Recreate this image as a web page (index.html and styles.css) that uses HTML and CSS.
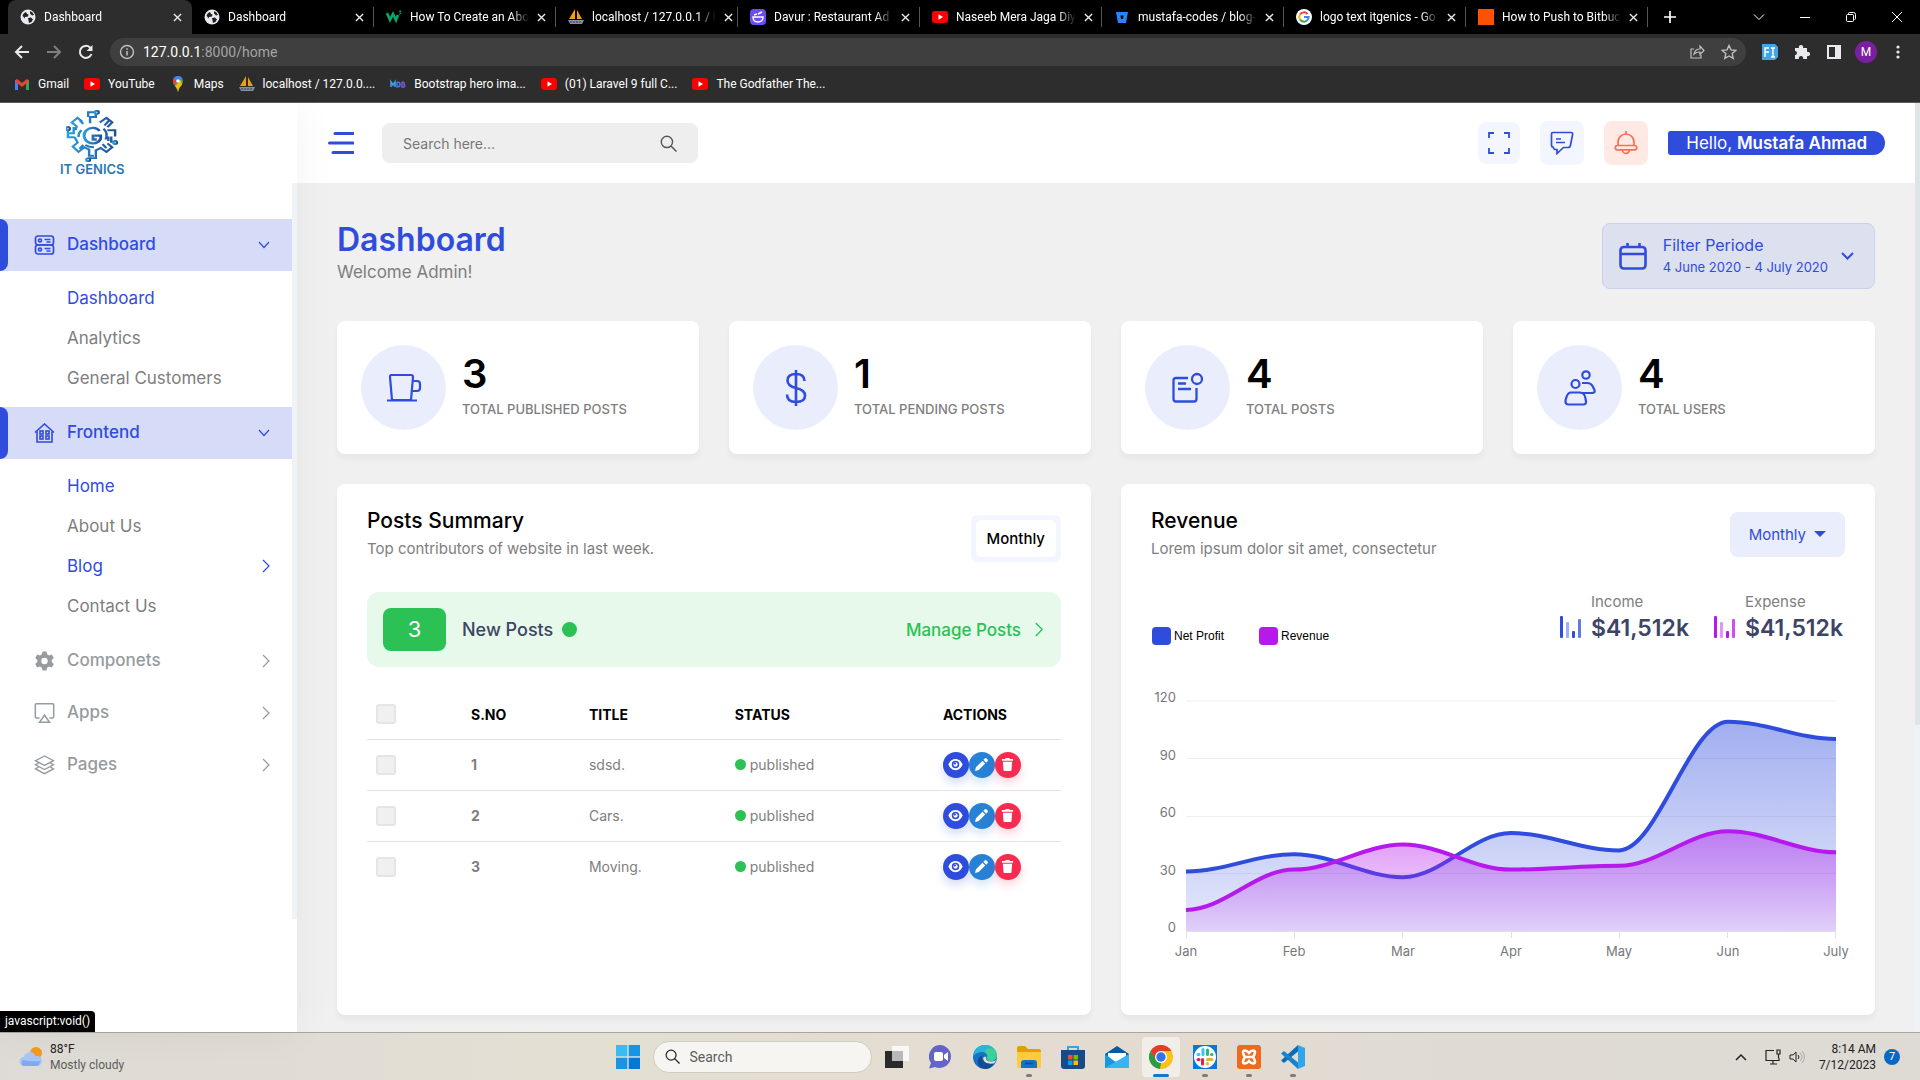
FILE: index.html
```html
<!DOCTYPE html>
<html lang="en">
<head>
<meta charset="utf-8">
<title>Dashboard</title>
<link rel="stylesheet" href="styles.css">
</head>
<body>
<svg class="sprite" aria-hidden="true">
  <symbol id="globe" viewBox="0 0 16 16"><circle cx="8" cy="8" r="7.500" fill="#e8eaed"/><path d="M2.500 6.500q1-3 3.500-3.500l1 2 1.500.5-.5 2-3 .5-.5 1.500zM10 2q3 1 4 4l-2 .5-2-2zM8 9l3-.5 2 2q-1 3-4 3.500l-.5-2.500z" fill="#202124"/></symbol>
  <symbol id="x" viewBox="0 0 10 10"><path d="M1 1l8 8M9 1L1 9" stroke="#e8eaed" stroke-width="1.5"/></symbol>
  <symbol id="yt" viewBox="0 0 16 16"><rect y="2" width="16" height="12" rx="3" fill="#f00"/><path d="M6.500 5.300v5.400L11 8z" fill="#fff"/></symbol>
  <symbol id="pma" viewBox="0 0 16 16"><path d="M7 0v10H1zM9 1l5 9H9z" fill="#f89c0e"/><path d="M0 11h16l-2 4H2z" fill="#8a8fa8"/><path d="M2 13h12" stroke="#333" stroke-dasharray="2 1"/></symbol>
  <symbol id="right" viewBox="0 0 8 14"><path d="M1 1l6 6-6 6" fill="none" stroke="currentColor" stroke-width="1.2"/></symbol>
  <symbol id="down" viewBox="0 0 12 8"><path d="M1 1l5 5.500L11 1" fill="none" stroke="currentColor" stroke-width="1.2"/></symbol>
  <symbol id="search" viewBox="0 0 16 16"><circle cx="6.500" cy="6.500" r="5.300" fill="none" stroke="currentColor" stroke-width="1.300"/><path d="M10.300 10.300L15.500 15.500" stroke="currentColor" stroke-width="1.400"/></symbol>
  <symbol id="eye" viewBox="0 0 16 12"><path d="M8 0C4 0 1.500 3 .5 6c1 3 3.500 6 7.500 6s6.500-3 7.500-6C14.500 3 12 0 8 0z" fill="#fff"/><circle cx="8" cy="6" r="4" fill="#2f4cdd"/><circle cx="8" cy="6" r="2.300" fill="#fff"/><circle cx="7.300" cy="5" r="1.200" fill="#2f4cdd"/></symbol>
  <symbol id="pen" viewBox="0 0 14 14"><path d="M0 14l1-4 7-7 3 3-7 7zM9 2l1.500-1.500a1.500 1.500 0 0 1 2 0l1 1a1.500 1.500 0 0 1 0 2L12 5z" fill="#fff"/></symbol>
  <symbol id="bin" viewBox="0 0 12 14"><path d="M0 1h3.500l.7-1h3.600l.7 1H12v2H0zM1 4h10l-.7 9a1 1 0 0 1-1 1H2.700a1 1 0 0 1-1-1z" fill="#fff"/></symbol>
</svg>

<header class="browser">
  <div class="tabs">
    <div class="tab active"><svg class="fav"><use href="#globe"/></svg><span>Dashboard</span><button aria-label="Close tab"><svg><use href="#x"/></svg></button></div>
    <div class="tab"><svg class="fav"><use href="#globe"/></svg><span>Dashboard</span><button aria-label="Close tab"><svg><use href="#x"/></svg></button></div>
    <div class="tab"><svg class="fav" viewBox="0 0 16 16"><path d="M1 4l3 7 3-6 3 6 2-5" fill="none" stroke="#04aa6d" stroke-width="2.600"/><path d="M13 2h2l-1 1.500q2 1-1 2" fill="none" stroke="#04aa6d"/></svg><span>How To Create an Abo</span><button aria-label="Close tab"><svg><use href="#x"/></svg></button></div>
    <div class="tab"><svg class="fav"><use href="#pma"/></svg><span>localhost / 127.0.0.1 / l</span><button aria-label="Close tab"><svg><use href="#x"/></svg></button></div>
    <div class="tab"><svg class="fav" viewBox="0 0 16 16"><rect width="16" height="16" rx="4" fill="#6c4cf0"/><path d="M3 8h10q0 5-5 5T3 8zM4 6l3-1M8 5l4-2" fill="none" stroke="#fff" stroke-width="1.400"/></svg><span>Davur : Restaurant Ad</span><button aria-label="Close tab"><svg><use href="#x"/></svg></button></div>
    <div class="tab"><svg class="fav"><use href="#yt"/></svg><span>Naseeb Mera Jaga Diy</span><button aria-label="Close tab"><svg><use href="#x"/></svg></button></div>
    <div class="tab"><svg class="fav" viewBox="0 0 16 16"><path d="M2 3h12l-2 11H4z" fill="#2684ff"/><path d="M6.500 6.500h3l-.5 3.500H7z" fill="#000"/></svg><span>mustafa-codes / blog-</span><button aria-label="Close tab"><svg><use href="#x"/></svg></button></div>
    <div class="tab"><svg class="fav" viewBox="0 0 16 16"><circle cx="8" cy="8" r="8" fill="#fff"/><g fill="none" stroke-width="2"><path d="M11.500 5A4.700 4.700 0 0 0 4 5.500" stroke="#ea4335"/><path d="M4 5.500a4.700 4.700 0 0 0 0 5" stroke="#fbbc05"/><path d="M4 10.500a4.700 4.700 0 0 0 7 1" stroke="#34a853"/><path d="M11 11.500A4.700 4.700 0 0 0 12.700 8H8" stroke="#4285f4"/></g></svg><span>logo text itgenics - Go</span><button aria-label="Close tab"><svg><use href="#x"/></svg></button></div>
    <div class="tab"><svg class="fav" viewBox="0 0 16 16"><path d="M0 0h16v16H0z" fill="#ff5200"/></svg><span>How to Push to Bitbuc</span><button aria-label="Close tab"><svg><use href="#x"/></svg></button></div>
    <button class="newtab" aria-label="New tab"><svg viewBox="0 0 12 12"><path d="M6 0v12M0 6h12" stroke="#fff" stroke-width="1.700"/></svg></button>
    <div class="wincontrols">
      <button aria-label="Search tabs"><svg viewBox="0 0 12 12"><path d="M1 3.500l5 5 5-5"/></svg></button>
      <button aria-label="Minimize"><svg viewBox="0 0 12 12"><path d="M1 6.500h10"/></svg></button>
      <button aria-label="Restore"><svg viewBox="0 0 12 12"><rect x="1.500" y="3.500" width="7" height="7" rx="1"/><path d="M3.500 3V2.500q0-1 1-1h4q2 0 2 2v4q0 1-1 1"/></svg></button>
      <button aria-label="Close"><svg viewBox="0 0 12 12"><path d="M1 1l10 10M11 1L1 11"/></svg></button>
    </div>
  </div>
  <div class="toolbar">
    <button aria-label="Back"><svg viewBox="0 0 16 16"><path d="M15 8H2M8 2L2 8l6 6" fill="none" stroke="#e8eaed" stroke-width="2"/></svg></button>
    <button aria-label="Forward"><svg viewBox="0 0 16 16"><path d="M1 8h13M8 2l6 6-6 6" fill="none" stroke="#7d7f82" stroke-width="2"/></svg></button>
    <button aria-label="Reload"><svg viewBox="0 0 16 16"><path d="M13.500 10A6 6 0 1 1 12 3.500l1 1" fill="none" stroke="#e8eaed" stroke-width="2"/><path d="M14.500 1v6h-6z" fill="#e8eaed"/></svg></button>
    <div class="address">
      <svg viewBox="0 0 16 16"><circle cx="8" cy="8" r="6.500" fill="none" stroke="#bdc1c6" stroke-width="1.400"/><path d="M8 7v4.500M8 4.300v1.500" stroke="#bdc1c6" stroke-width="1.500"/></svg>
      <span class="url"><b>127.0.0.1</b>:8000/home</span>
      <svg viewBox="0 0 16 16"><path d="M5 5H2v9h10v-3M5 10q1-5 6-5V2l4 4.500-4 4V8Q7 8 5 10z" fill="none" stroke="#bdc1c6" stroke-width="1.200"/></svg>
      <svg viewBox="0 0 16 16"><path d="M8 1.500l2 4.400 4.800.5-3.600 3.200 1 4.800L8 12l-4.200 2.400 1-4.800L1.200 6.400 6 5.900z" fill="none" stroke="#bdc1c6" stroke-width="1.400"/></svg>
    </div>
    <div class="exts">
      <svg viewBox="0 0 16 16"><path d="M0 0h13l3 3v10l-3 3H0z" fill="#41a5e8"/><path d="M3 13V4h4M3 8h4M9 4h4M11 4v9M9 13h4" fill="none" stroke="#fff" stroke-width="1.400"/></svg>
      <svg viewBox="0 0 16 16"><path d="M1 4h4a2.200 2.200 0 1 1 4 0h4v4a2.200 2.200 0 1 1 0 4v3H9a2.200 2.200 0 1 0-4 0H1v-4a2 2 0 1 0 0-4z" fill="#e8eaed"/></svg>
      <svg viewBox="0 0 16 16"><path d="M2 2h12v12H2z" fill="none" stroke="#e8eaed" stroke-width="2"/><path d="M9 2h5v12H9z" fill="#e8eaed"/></svg>
      <span class="avatar">M</span>
      <svg viewBox="0 0 16 16"><g fill="#e8eaed"><circle cx="8" cy="3" r="1.600"/><circle cx="8" cy="8" r="1.600"/><circle cx="8" cy="13" r="1.600"/></g></svg>
    </div>
  </div>
  <nav class="bookmarks">
    <a href="#"><svg viewBox="0 0 16 16"><g fill="none" stroke-width="3"><path d="M2.500 14V4" stroke="#4285f4"/><path d="M13.500 14V4" stroke="#34a853"/><path d="M2 4l6 5 6-5" stroke="#ea4335"/></g></svg>Gmail</a>
    <a href="#"><svg><use href="#yt"/></svg>YouTube</a>
    <a href="#"><svg viewBox="0 0 16 16"><path d="M8 0a5 5 0 0 1 5 5c0 4-4 5-5 11C7 11 3 9 3 5a5 5 0 0 1 5-5z" fill="#34a853"/><path d="M8 0a5 5 0 0 1 4.500 3L4 9 3 5a5 5 0 0 1 5-5z" fill="#4285f4"/><path d="M3.600 2.600L7 5 4 9Q2 6 3.600 2.600z" fill="#ea4335"/><path d="M12 9Q9 11 8 16 7 12 5 10l6-6z" fill="#fbbc04"/><circle cx="8" cy="5" r="1.800" fill="#fff"/></svg>Maps</a>
    <a href="#"><svg><use href="#pma"/></svg>localhost / 127.0.0....</a>
    <a href="#"><svg viewBox="0 0 16 16"><g fill="none" stroke-width="1.600"><path d="M1 11V6l2 3 2-3v5" stroke="#3aa0e8"/><path d="M7 6v5q3 0 3-2.500T7 6" stroke="#4c6fe0"/><path d="M12 6v5h2q1.500-1.300 0-2.500Q15 6 12 6" stroke="#7458d8"/></g></svg>Bootstrap hero ima...</a>
    <a href="#"><svg><use href="#yt"/></svg>(01) Laravel 9 full C...</a>
    <a href="#"><svg><use href="#yt"/></svg>The Godfather The...</a>
  </nav>
</header>

<div class="page">
  <aside class="sidebar">
    <a class="logo" href="#">
      <svg viewBox="7 0 54 67" preserveAspectRatio="none"><defs><linearGradient id="lg" x1="0" x2="1"><stop stop-color="#2a9fd8"/><stop offset="1" stop-color="#234f9c"/></linearGradient></defs>
        <g fill="none" stroke="url(#lg)" stroke-width="2.500"><path d="M32 17V9h6V5M30 9V3h7M24 15l-5-5-6 6 5 5-1 5M42 16l7-6 6 6-5 6M21 13l4 5M52 13l-5 7M50 26h8v8M15 22v8H9v-4M9 30v5h7M54 34v7h3M51 34v6M16 35l3 7-5 5 6 7 6-6 5 3v8h5M50 43l5 5-6 6-6-5-5 3v10h-7M21 50l4-5M49 49l-4-5M23 26a13 13 0 0 0-3 9M27 45q4 3 9 3M46 24a14 14 0 0 1 2 14"/><path d="M42 27a9 10 0 1 0 1 10v-4h-8v5h4" stroke-width="3"/><circle cx="39" cy="3" r="2"/><circle cx="9" cy="24" r="2"/><circle cx="58" cy="42" r="2"/><circle cx="30" cy="64" r="2"/></g></svg>
      <span>IT GENICS</span>
    </a>
    <nav class="menu">
      <a class="item on" href="#"><svg viewBox="0 0 20 20"><g fill="none" stroke="currentColor" stroke-width="1.700"><rect x="1" y="1" width="18" height="9" rx="2.500"/><rect x="1" y="10" width="18" height="9" rx="2.500"/><circle cx="5.500" cy="5.500" r="1.500"/><circle cx="5.500" cy="14.500" r="1.500"/><path d="M10 4.500h6M12 7h4M10 13.500h6M12 16h4"/></g></svg><span>Dashboard</span><svg class="down"><use href="#down"/></svg></a>
      <div class="sub"><a class="hot" href="#">Dashboard</a><a href="#">Analytics</a><a href="#">General Customers</a></div>
      <a class="item on" href="#"><svg viewBox="0 0 20 20"><g fill="none" stroke="currentColor" stroke-width="1.600"><path d="M.5 9.500L10 1l9.500 8.500M2.500 8.500V19h15V8.500"/><rect x="5.500" y="8" width="3" height="3"/><rect x="11.500" y="8" width="3" height="3"/><rect x="5.500" y="13" width="3" height="3"/><rect x="11.500" y="13" width="3" height="3"/></g></svg><span>Frontend</span><svg class="down"><use href="#down"/></svg></a>
      <div class="sub"><a class="hot" href="#">Home</a><a href="#">About Us</a><a class="hot" href="#">Blog<svg class="right"><use href="#right"/></svg></a><a href="#">Contact Us</a></div>
      <a class="item" href="#"><svg viewBox="0 0 20 20"><path fill="currentColor" fill-rule="evenodd" d="M8 .5h4l.6 2.800 2 1.100 2.700-.9 2 3.500-2.100 1.900v2.200l2.100 1.900-2 3.500-2.700-.9-2 1.100-.6 2.800H8l-.6-2.800-2-1.100-2.700.9-2-3.500 2.100-1.900V8.900L.7 7l2-3.500 2.700.9 2-1.100zM10 6.800a3.200 3.200 0 1 0 0 6.400 3.200 3.200 0 0 0 0-6.400z"/></svg><span>Componets</span><svg class="right"><use href="#right"/></svg></a>
      <a class="item" href="#"><svg viewBox="0 0 20 20"><path fill="none" stroke="currentColor" stroke-width="1.500" d="M5 15H2q-1.200 0-1.200-1.200V2Q.8.800 2 .8h16q1.200 0 1.200 1.200v11.800Q19.200 15 18 15h-3M10 12l5 7.200H5z"/></svg><span>Apps</span><svg class="right"><use href="#right"/></svg></a>
      <a class="item" href="#"><svg viewBox="0 0 20 20"><path fill="none" stroke="currentColor" stroke-width="1.400" d="M10 1l9 4.700-9 4.700-9-4.700zM4 8L1 9.800l9 4.700 9-4.700L16 8M4 12l-3 1.900 9 4.700 9-4.700-3-1.900"/></svg><span>Pages</span><svg class="right"><use href="#right"/></svg></a>
    </nav>
  </aside>

  <div class="content">
    <div class="topbar">
      <button class="burger" aria-label="Toggle menu"><svg viewBox="0 0 26 22"><path d="M7 1.500h18M1.500 11H25M5 20.500h20" stroke="#2f4cdd" stroke-width="3" stroke-linecap="round"/></svg></button>
      <label class="search"><input type="text" placeholder="Search here..." aria-label="Search here"><svg><use href="#search"/></svg></label>
      <div class="tools">
        <button class="full" aria-label="Full screen"><svg viewBox="0 0 22 22"><path d="M1 6V1h5M16 1h5v5M21 16v5h-5M6 21H1v-5" fill="none" stroke="#2f4cdd" stroke-width="1.800"/></svg></button>
        <button class="chat" aria-label="Messages"><svg viewBox="0 0 24 24"><path d="M3 1.500h18q2 0 1.600 2l-2.200 11q-.4 2-2.400 2h-4.500L7 22.500v-4H4.500L3 16q-1.500 0-1.500-2V3q0-1.500 1.500-1.500zM6 8h5M6 11.500h9" fill="none" stroke="#2f4cdd" stroke-width="1.700"/></svg></button>
        <button class="bell" aria-label="Notifications"><svg viewBox="0 0 24 24"><path d="M12 0v3M4 14.500V11a8 8 0 0 1 16 0v3.500M3.500 14.500h17a2.200 2.200 0 0 1 0 4.400h-17a2.200 2.200 0 0 1 0-4.400zM8.500 19a3.500 3.500 0 0 0 7 0" fill="none" stroke="#ff6d4d" stroke-width="1.700"/></svg></button>
        <button class="hello">Hello, <b>Mustafa Ahmad</b></button>
      </div>
    </div>

    <main>
      <div class="heading">
        <div><h1>Dashboard</h1><p>Welcome Admin!</p></div>
        <button class="filter">
          <svg class="cal" viewBox="0 0 28 28"><path d="M5 5h18q3.500 0 3.500 3.500V23q0 3.500-3.500 3.500H5q-3.500 0-3.500-3.500V8.500Q1.500 5 5 5zM1.500 12h25M8.500 1v4M20.500 1v4" fill="none" stroke="#2f4cdd" stroke-width="2.600"/></svg>
          <span class="period">Filter Periode<small>4 June 2020 - 4 July 2020</small></span>
          <svg class="arrow" viewBox="0 0 13 8"><path d="M1 1l5.500 5.500L12 1" fill="none" stroke="#2f4cdd" stroke-width="2"/></svg>
        </button>
      </div>

      <section class="stats">
        <div class="card stat"><span class="disc"><svg viewBox="0 0 36 36"><path d="M5 5h20q2 0 2 2l-2 23H6L4 7q0-2 1-2zM1 30.500h30M27 11h4q3 0 3 3v4q0 3-3 3h-5" fill="none" stroke="#2f4cdd" stroke-width="2.200"/></svg></span><div><strong>3</strong><p>TOTAL PUBLISHED POSTS</p></div></div>
        <div class="card stat"><span class="disc"><svg viewBox="0 0 36 36"><path d="M18 0v36M26.500 11q0-7-8.500-7t-8.500 6.500q0 5.500 8.500 7.500 9 2 9 7.500 0 6.500-9 6.500-9 0-9-7.500" fill="none" stroke="#2f4cdd" stroke-width="2.600"/></svg></span><div><strong>1</strong><p>TOTAL PENDING POSTS</p></div></div>
        <div class="card stat"><span class="disc"><svg viewBox="0 0 36 36"><path d="M18 8H6Q3.500 8 3.500 10.500V29q0 2.500 2.500 2.500h18q2.500 0 2.500-2.500V18M8 13.500h8M8 19h13" fill="none" stroke="#2f4cdd" stroke-width="2.300"/><circle cx="27" cy="9" r="5" fill="none" stroke="#2f4cdd" stroke-width="2.300"/></svg></span><div><strong>4</strong><p>TOTAL POSTS</p></div></div>
        <div class="card stat"><span class="disc"><svg viewBox="0 0 36 36"><g fill="none" stroke="#2f4cdd" stroke-width="2.200"><circle cx="24" cy="5" r="3.700"/><circle cx="13.500" cy="14" r="4"/><path d="M9 22.500h9q4.500 0 5.500 6l.5 3q.2 3-2.500 3h-15q-3 0-3-3 0-2 1-4.500 1.500-4.500 4.500-4.500zM20 13h5q4 0 5.500 3l2 4q1 3-2.500 3H18"/></g></svg></span><div><strong>4</strong><p>TOTAL USERS</p></div></div>
      </section>

      <section class="panels">
        <div class="card posts">
          <div class="cardhead">
            <div><h2>Posts Summary</h2><p>Top contributors of website in last week.</p></div>
            <div class="pill"><button>Monthly</button></div>
          </div>
          <div class="notice"><span class="count">3</span><span class="label">New Posts</span><i class="dot"></i><a href="#">Manage Posts<svg class="right"><use href="#right"/></svg></a></div>
          <table>
            <thead><tr><th class="c1"><input type="checkbox" aria-label="Select all"></th><th class="c2">S.NO</th><th class="c3">TITLE</th><th class="c4">STATUS</th><th>ACTIONS</th></tr></thead>
            <tbody>
              <tr><td><input type="checkbox" aria-label="Select post 1"></td><td><b>1</b></td><td>sdsd.</td><td><span class="status"><i class="dot"></i>published</span></td><td><div class="acts"><button class="view" aria-label="View"><svg><use href="#eye"/></svg></button><button class="edit" aria-label="Edit"><svg><use href="#pen"/></svg></button><button class="del" aria-label="Delete"><svg><use href="#bin"/></svg></button></div></td></tr>
              <tr><td><input type="checkbox" aria-label="Select post 2"></td><td><b>2</b></td><td>Cars.</td><td><span class="status"><i class="dot"></i>published</span></td><td><div class="acts"><button class="view" aria-label="View"><svg><use href="#eye"/></svg></button><button class="edit" aria-label="Edit"><svg><use href="#pen"/></svg></button><button class="del" aria-label="Delete"><svg><use href="#bin"/></svg></button></div></td></tr>
              <tr><td><input type="checkbox" aria-label="Select post 3"></td><td><b>3</b></td><td>Moving.</td><td><span class="status"><i class="dot"></i>published</span></td><td><div class="acts"><button class="view" aria-label="View"><svg><use href="#eye"/></svg></button><button class="edit" aria-label="Edit"><svg><use href="#pen"/></svg></button><button class="del" aria-label="Delete"><svg><use href="#bin"/></svg></button></div></td></tr>
            </tbody>
          </table>
        </div>

        <div class="card revenue">
          <div class="cardhead">
            <div><h2>Revenue</h2><p>Lorem ipsum dolor sit amet, consectetur</p></div>
            <button class="range">Monthly<i class="caret"></i></button>
          </div>
          <div class="figures">
            <div class="legend"><span><i class="blue"></i>Net Profit</span><span><i class="purple"></i>Revenue</span></div>
            <div class="sums">
              <div class="sum"><svg viewBox="0 0 22 22"><g fill="#2f4cdd"><rect width="3" height="22" rx="1"/><rect x="6" y="6" width="3" height="16" rx="1" opacity=".45"/><rect x="12" y="15" width="3" height="7" rx="1"/><rect x="18" y="3" width="3" height="19" rx="1" opacity=".75"/></g></svg><div><p>Income</p><strong>$41,512k</strong></div></div>
              <div class="sum"><svg viewBox="0 0 22 22"><g fill="#b519ec"><rect width="3" height="22" rx="1"/><rect x="6" y="6" width="3" height="16" rx="1" opacity=".45"/><rect x="12" y="15" width="3" height="7" rx="1"/><rect x="18" y="3" width="3" height="19" rx="1" opacity=".75"/></g></svg><div><p>Expense</p><strong>$41,512k</strong></div></div>
            </div>
          </div>
          <svg class="chart" viewBox="0 0 694 272" role="img" aria-label="Net profit and revenue, January to July">
            <defs>
              <linearGradient id="ba" x1="0" y1="0" x2="0" y2="1"><stop stop-color="#2f4cdd" stop-opacity=".45"/><stop offset="1" stop-color="#2f4cdd" stop-opacity=".12"/></linearGradient>
              <linearGradient id="pa" x1="0" y1="0" x2="0" y2="1"><stop stop-color="#b519ec" stop-opacity=".45"/><stop offset="1" stop-color="#b519ec" stop-opacity=".12"/></linearGradient>
            </defs>
            <path d="M35 11h650M35 68.500h650M35 126.500h650M35 183.500h650" stroke="#eee"/>
            <path d="M35 241.500h650M35.500 241v7M143.500 241v7M251.500 241v7M360.500 241v7M468.500 241v7M576.500 241v7M684.500 241v7" stroke="#e0e0e0"/>
            <path fill="url(#ba)" d="M35 181.500C73 181.500 105 164.200 143 164.200S214 187.200 252 187.200 322 143.100 360 143.100 430 160.400 468 160.400 539 31.700 577 31.700 647 49 685 49V241H35z"/>
            <path fill="none" stroke="#2f4cdd" stroke-width="4" d="M35 181.500C73 181.500 105 164.200 143 164.200S214 187.200 252 187.200 322 143.100 360 143.100 430 160.400 468 160.400 539 31.700 577 31.700 647 49 685 49"/>
            <path fill="url(#pa)" d="M35 219.900C73 219.900 105 179.600 143 179.600S214 154.600 252 154.600 322 179.600 360 179.600 430 175.700 468 175.700 539 141.200 577 141.200 647 162.300 685 162.300V241H35z"/>
            <path fill="none" stroke="#b519ec" stroke-width="4" d="M35 219.900C73 219.900 105 179.600 143 179.600S214 154.600 252 154.600 322 179.600 360 179.600 430 175.700 468 175.700 539 141.200 577 141.200 647 162.300 685 162.300"/>
            <g text-anchor="end"><text x="25" y="12">120</text><text x="25" y="70">90</text><text x="25" y="127">60</text><text x="25" y="185">30</text><text x="25" y="242">0</text></g>
            <g text-anchor="middle"><text x="35" y="266">Jan</text><text x="143" y="266">Feb</text><text x="252" y="266">Mar</text><text x="360" y="266">Apr</text><text x="468" y="266">May</text><text x="577" y="266">Jun</text><text x="685" y="266">July</text></g>
          </svg>
        </div>
      </section>
    </main>
  </div>
  <div class="scroll"><i></i></div>
  <div class="linkstatus">javascript:void()</div>
</div>

<footer class="taskbar">
  <div class="weather">
    <svg viewBox="0 0 24 24"><circle cx="17" cy="8" r="6" fill="#f59a1b"/><path d="M5 21a4.500 4.500 0 0 1 0-9 6 6 0 0 1 11.500-1A5 5 0 0 1 19 21z" fill="#a9c5f4"/><path d="M4 21a4 4 0 0 1 0-6q8 2 17 1-1 5-3 5z" fill="#82a8ee"/></svg>
    <p>88°F<small>Mostly cloudy</small></p>
  </div>
  <div class="apps">
    <button class="start" aria-label="Start"><svg viewBox="0 0 24 24"><path d="M0 0h11.300v11.300H0z" fill="#36bdf4"/><path d="M12.700 0H24v11.300H12.700zM0 12.700h11.300V24H0z" fill="#1894e2"/><path d="M12.700 12.700H24V24H12.700z" fill="#0578d4"/></svg></button>
    <label class="find"><svg><use href="#search"/></svg><input type="text" placeholder="Search" aria-label="Search Windows"></label>
    <button aria-label="Task view"><svg viewBox="0 0 24 24"><path d="M7 1h17v15H7z" fill="#f8f8f8"/><path d="M0 6h18v17H0z" fill="#2a2a2a"/><path d="M7 6h11v10H7z" fill="#b9b9b9"/></svg></button>
    <button aria-label="Chat"><svg viewBox="0 0 24 24"><path d="M12 0a11.500 11.500 0 1 1-6 22L0 23.500 2 18A11.500 11.500 0 0 1 12 0z" fill="#6264c7"/><rect x="5" y="7" width="9" height="9" rx="2" fill="#fff"/><path d="M15 10l4-3v9l-4-3z" fill="#fff"/></svg></button>
    <button aria-label="Edge"><svg viewBox="0 0 24 24"><circle cx="12" cy="12" r="12" fill="#1672c4"/><path d="M0 11C1 4 6 0 12 0c7 0 12 5 12 10 0 4-3 6-6 6-4 0-5-2-4-4 1-3-2-5-5-5-4 0-8 2-9 4z" fill="#3ccf9a"/><path d="M0 11C1 4 6 0 12 0q6 0 9 4c-6-2-9 0-9 3Q5 6 0 11z" fill="#2bb3dc"/><path d="M13 11.500q-1 5 5 5 3 0 5-1.500-1 2-2 3.500-9 2-11-5 .5-2 3-2z" fill="#e4ddd2"/><path d="M9 12q0 8 12 6.500-4 5.500-9 5.500Q3 22 5 15q1-4 6-5-2 1-2 2z" fill="#124c94"/></svg></button>
    <button class="run" aria-label="File Explorer"><svg viewBox="0 0 24 24"><path d="M0 3q0-2 2-2h6l3 3h11q2 0 2 2v16H0z" fill="#e0a100"/><path d="M0 7h24v14q0 2-2 2H2q-2 0-2-2z" fill="#ffcb3d"/><path d="M4 23v-5q0-3 3-3h10q3 0 3 3v5z" fill="#1470c8"/><path d="M8 18.500h8" stroke="#0b4f96" stroke-width="1.500"/></svg></button>
    <button aria-label="Store"><svg viewBox="0 0 24 24"><path d="M7 6V2h10v4" fill="none" stroke="#2fa8e8" stroke-width="2"/><path d="M0 5h24v16q0 3-3 3H3q-3 0-3-3z" fill="#164b86"/><path d="M7 10h4.500v4.500H7z" fill="#f25022"/><path d="M12.500 10H17v4.500h-4.500z" fill="#7fba00"/><path d="M7 15.500h4.500V20H7z" fill="#00a4ef"/><path d="M12.500 15.500H17V20h-4.500z" fill="#ffb900"/></svg></button>
    <button aria-label="Mail"><svg viewBox="0 0 24 24"><path d="M0 9l12-8 12 8v5H0z" fill="#0a57a4"/><path d="M3 8h18v8H3z" fill="#fff"/><path d="M0 9l12 9 12-9v14H0z" fill="#1896e0"/><path d="M0 23L24 9v14z" fill="#35b6f2"/></svg></button>
    <button class="current" aria-label="Chrome"><svg viewBox="0 0 24 24"><circle cx="12" cy="12" r="12" fill="#fbc116"/><path d="M1.600 6A12 12 0 0 1 22.400 6H12l-6 9z" fill="#e33b2e"/><path d="M1.600 6l5.200 9L12 18l-1 6A12 12 0 0 1 1.600 6z" fill="#2a9c48"/><circle cx="12" cy="12" r="6" fill="#fff"/><circle cx="12" cy="12" r="4.700" fill="#2f74e8"/></svg></button>
    <button class="run" aria-label="Slack"><svg viewBox="0 0 24 24"><path d="M0 0h24v24H0z" fill="#0a78d6"/><circle cx="12" cy="12" r="11" fill="#fff"/><g fill="none" stroke-width="3" stroke-linecap="round"><path d="M10 4.500v5M5 9.500h1" stroke="#36c5f0"/><path d="M14.500 5v4.500M18.500 9.500h.5" stroke="#2eb67d"/><path d="M14.500 14.500H19M14.500 18.500v.5" stroke="#ecb22e"/><path d="M5 14.500h1M9.500 14.500V19" stroke="#e01e5a"/></g></svg></button>
    <button class="run" aria-label="XAMPP"><svg viewBox="0 0 24 24"><rect width="24" height="24" rx="3" fill="#ef6a1c"/><path d="M8 12Q4 6 8 5.500q2 0 4 2.500 2-2.500 4-2.500 4 .5 0 6.500 4 6 0 6.500-2 0-4-2.500-2 2.500-4 2.500Q4 18 8 12zM9 12h6" fill="none" stroke="#fff" stroke-width="2.600"/></svg></button>
    <button class="run" aria-label="Visual Studio Code"><svg viewBox="0 0 24 24"><path d="M17 0v6.500L3 18 0 15.500z" fill="#0b6db5"/><path d="M17 24v-6.500L3 6 0 8.500z" fill="#1684cc"/><path d="M17 0l7 3v18l-7 3z" fill="#2fa5ee"/></svg></button>
  </div>
  <div class="tray">
    <svg class="up" viewBox="0 0 12 8"><path d="M1 7l5-5 5 5" fill="none" stroke="#222" stroke-width="1.500"/></svg>
    <svg viewBox="0 0 16 16"><path d="M9 1.500H1v10h13V9M5 15h7M8 11.500V15M12 1h3v4h-3zM13.500 5v4" fill="none" stroke="#222" stroke-width="1.200"/></svg>
    <svg viewBox="0 0 16 16"><path d="M1 6h3l3-3v10l-3-3H1z" fill="none" stroke="#222"/><path d="M9 6q2 2 0 4" fill="none" stroke="#222"/><path d="M11 4q4 4 0 8M13 2q5 6 0 12" fill="none" stroke="#aaa"/></svg>
    <p class="clock">8:14 AM<br>7/12/2023</p>
    <span class="badge">7</span>
  </div>
</footer>
</body>
</html>
```
FILE: styles.css
```css
* { box-sizing: border-box; }
body { margin: 0; height: 100vh; display: flex; flex-direction: column; overflow: hidden; font-family: Inter, "Open Sans", sans-serif; color: #7e7e7e; }
button, input { font: inherit; color: inherit; }
button { border: 0; background: none; padding: 0; margin: 0; }
a { color: inherit; text-decoration: none; }
p, h1, h2 { margin: 0; }
svg { display: block; flex: none; }
.sprite { position: absolute; width: 0; height: 0; }

/* Browser frame */
.browser { background: #2d2d2d; color: #fff; font: 12px/16px Roboto, "Open Sans", sans-serif; border-bottom: 1px solid #5c5c5c; }
.tabs { display: flex; align-items: center; height: 34px; background: #000; padding-left: 8px; }
.tab { display: flex; align-items: center; gap: 8px; flex: 0 1 182px; min-width: 0; height: 20px; padding: 0 9px 0 12px; border-right: 1px solid #555; }
.tab.active { flex-basis: 184px; height: 34px; background: #2d2d2d; border-radius: 8px 8px 0 0; border-color: transparent; }
.tab span { flex: 1; white-space: nowrap; mask-image: linear-gradient(90deg, #000 85%, transparent); }
.fav { width: 16px; height: 16px; }
.tab button svg { width: 9px; height: 9px; }
.newtab { margin: 0 16px; }
.newtab svg { width: 12px; height: 12px; }
.wincontrols { display: flex; margin-left: auto; }
.wincontrols button { width: 46px; height: 28px; display: grid; place-items: center; }
.wincontrols svg { width: 12px; height: 12px; fill: none; stroke: #fff; }
.toolbar { display: flex; align-items: center; height: 36px; padding: 0 14px; gap: 16px; }
.toolbar svg { width: 16px; height: 16px; }
.address { flex: 1; display: flex; align-items: center; gap: 16px; height: 28px; border-radius: 14px; background: #3f3f3f; padding: 0 9px; }
.url { flex: 1; font-size: 14px; margin-left: -8px; color: #a5a5a5; }
.url b { color: #fff; font-weight: 400; }
.exts { display: flex; align-items: center; gap: 16px; }
.avatar { width: 22px; height: 22px; margin: 0 -3px; border-radius: 50%; background: #7b1fa2; text-align: center; line-height: 22px; }
.bookmarks { display: flex; align-items: center; height: 32px; gap: 15px; padding: 0 14px 4px; }
.bookmarks a { display: flex; align-items: center; gap: 8px; }
.bookmarks svg { width: 16px; height: 16px; }

/* Page shell */
.page { position: relative; flex: 1; min-height: 0; display: flex; background: #f0f0f0; }
.sidebar { position: relative; flex: 0 0 297px; display: flex; flex-direction: column; background: #fff; box-shadow: 0 0 40px rgba(0, 0, 0, .05); }
.logo { align-self: flex-start; display: flex; flex-direction: column; align-items: center; height: 80px; padding: 7px 0 0 60px; }
.logo svg { width: 52px; height: 52px; }
.logo span { font: 600 13px/14px Inter, sans-serif; color: #2777b4; }
.menu { flex: 1; margin-bottom: 113px; padding-top: 36px; border-right: 5px solid #eff3f5; font-size: 17px; }
.item { position: relative; display: flex; align-items: center; height: 52px; padding: 0 22px 0 34px; color: #969ba0; font-weight: 500; }
.item span { flex: 1; margin-left: 12px; padding-bottom: 2px; }
.item > svg:first-child { width: 21px; height: 20px; }
.item.on { background: #d6dbf8; color: #2f4cdd; }
.item.on::before { content: ""; position: absolute; left: 0; top: 0; bottom: 0; width: 8px; border-radius: 0 8px 8px 0; background: #2f4cdd; }
.down { width: 12px; height: 8px; }
.right { width: 8px; height: 14px; }
.sub { padding: 7px 0 9px; }
.sub a { display: flex; align-items: center; justify-content: space-between; height: 40px; padding: 0 22px 0 67px; }
.sub .hot { color: #2f4cdd; }
.content { flex: 1; min-width: 0; }
.topbar { display: flex; align-items: center; height: 80px; background: #fff; padding: 0 30px 0 31px; }
.burger svg { width: 26px; height: 22px; }
.search { display: flex; align-items: center; flex: 0 1 316px; height: 40px; margin-left: 28px; padding: 0 21px; border-radius: 8px; background: #eee; color: #555; }
.search input { flex: 1; min-width: 0; border: 0; background: none; outline: 0; font-size: 14px; padding: 0; }
.search input::placeholder { color: #777; }
.search svg { width: 17px; height: 17px; }
.tools { display: flex; align-items: center; gap: 20px; margin-left: auto; }
.tools button { display: grid; place-items: center; width: 44px; height: 44px; border-radius: 8px; background: #f3f6ff; }
.tools .full { width: 42px; height: 42px; }
.full svg { width: 22px; height: 22px; }
.chat svg, .bell svg { width: 24px; height: 24px; }
.tools .bell { background: #ffe9e4; }
.tools .hello { display: block; width: auto; height: 24px; padding: 0 18px; border-radius: 4px 20px 20px 4px; background: #2f4cdd; color: #fff; font-size: 17px; line-height: 24px; }
.hello b { font-weight: 600; }
main { padding: 40px; }
.heading { display: flex; justify-content: space-between; margin-bottom: 32px; }
h1 { font-size: 32px; line-height: 34px; font-weight: 600; color: #2f4cdd; }
.heading p { font-size: 17px; line-height: 30px; }
.filter { display: flex; align-items: center; height: 66px; padding: 0 20px 0 16px; border: 1px solid #cbd1f0; border-radius: 8px; background: #dce0ef; color: #2f4cdd; text-align: left; }
.cal { width: 28px; height: 28px; }
.period { margin: 0 13px 0 16px; font-size: 16px; line-height: 22px; }
.period small { display: block; font-size: 13px; line-height: 22px; }
.arrow { width: 13px; height: 8px; }
.card { background: #fff; border-radius: 8px; box-shadow: 0 5px 5px rgba(82, 63, 105, .05); }
.stats { display: grid; grid-template-columns: repeat(4, 1fr); gap: 30px; margin-bottom: 30px; }
.stat { display: flex; align-items: center; gap: 16px; padding: 24px; }
.disc { display: grid; place-items: center; flex: none; width: 85px; height: 85px; border-radius: 50%; background: #eaedfc; }
.disc svg { width: 36px; height: 36px; }
.stat strong { display: block; font-size: 40px; line-height: 46px; font-weight: 600; color: #000; }
.stat p { padding-bottom: 3px; font-size: 13px; line-height: 24px; font-weight: 500; }
.panels { display: grid; grid-template-columns: 1fr 1fr; gap: 30px; }
.panels .card { padding: 19px 30px 53px; }
.cardhead { display: flex; justify-content: space-between; align-items: center; height: 62px; }
h2 { font-size: 21px; line-height: 30px; font-weight: 500; color: #000; }
.cardhead p { font-size: 15px; line-height: 26px; }
.pill { padding: 5px; margin-top: 8px; border-radius: 6px; background: #f3f6ff; }
.pill button { height: 37px; padding: 0 11px; border-radius: 6px; background: #fff; color: #000; font-size: 15px; font-weight: 500; }

/* Posts */
.notice { display: flex; align-items: center; height: 75px; margin-top: 27px; padding: 0 16px; border-radius: 12px; background: #e6f9ea; }
.count { width: 63px; height: 43px; border-radius: 8px; background: #2bc155; color: #fff; text-align: center; font-size: 22px; line-height: 43px; }
.label { margin-left: 16px; font-size: 18px; font-weight: 500; color: #3d4465; }
.dot { flex: none; width: 11px; height: 11px; border-radius: 50%; background: #2bc155; }
.notice .dot { width: 15px; height: 15px; margin-left: 9px; }
.notice a { display: flex; align-items: center; gap: 12px; margin-left: auto; color: #2bc155; font-size: 17px; font-weight: 500; }
.notice .right { width: 12px; height: 15px; }
table { width: 100%; margin-top: 23px; table-layout: fixed; border-collapse: collapse; font-size: 14px; text-align: left; }
th, td { padding: 0 9px; height: 51px; border-bottom: 1px solid #e3e3e3; }
th { height: 49px; color: #000; font-weight: 700; }
tbody tr:last-child td { border: 0; }
.c1 { width: 95px; }
.c2 { width: 17%; }
.c3 { width: 21%; }
.c4 { width: 30%; }
table input { display: block; appearance: none; width: 20px; height: 20px; margin: 0; border: 2px solid #e5e5e5; border-radius: 3px; background: #f0f0f0; }
.status { display: flex; align-items: center; gap: 4px; }
.acts { display: flex; }
.acts button { display: grid; place-items: center; width: 26px; height: 26px; border-radius: 50%; background: #2f4cdd; box-shadow: 0 5px 10px rgba(47, 76, 221, .2); }
.acts .edit { background: #2781d5; box-shadow: 0 5px 10px rgba(39, 129, 213, .2); }
.acts .del { background: #f72b50; box-shadow: 0 5px 10px rgba(247, 43, 80, .2); }
.acts svg { width: 15px; height: 13px; }

/* Revenue */
.range { display: flex; align-items: center; gap: 8px; height: 45px; padding: 0 19px; border-radius: 8px; background: #eaedfc; color: #2f4cdd; font-size: 15px; }
.caret { border: 6px solid transparent; border-top-color: #2f4cdd; border-bottom: 0; }
.figures { display: flex; justify-content: space-between; align-items: flex-end; margin-top: 27px; padding: 0 2px 0 1px; }
.legend { display: flex; gap: 35px; font: 12px/18px "Liberation Sans", sans-serif; color: #000; }
.legend span { display: flex; gap: 3px; }
.legend i { width: 19px; height: 18px; border-radius: 4px; }
.blue { background: #2f4cdd; }
.purple { background: #b519ec; }
.sums { display: flex; gap: 25px; }
.sum { display: flex; align-items: flex-end; gap: 9px; }
.sum svg { width: 22px; height: 22px; margin-bottom: 7px; }
.sum p { font-size: 15px; line-height: 20px; }
.sum strong { display: block; font-size: 23px; line-height: 33px; font-weight: 600; color: #3d4465; }
.chart { width: 100%; height: auto; margin-top: 45px; overflow: visible; }
.chart text { font-size: 13px; fill: #777; }

/* Overlays */
.scroll { flex: 0 0 5px; background: #eff3f5; }
.scroll i { display: block; height: 67%; background: #dfe5e6; }
.linkstatus { position: absolute; left: 0; bottom: 0; padding: 0 5px; background: #000; color: #fff; font: 12px/21px Roboto, sans-serif; border-top-right-radius: 4px; }

/* Taskbar */
.taskbar { display: grid; grid-template-columns: 1fr auto 1fr; align-items: center; height: 48px; border-top: 1px solid #aaa5a0; background: linear-gradient(90deg, #dedad5, #e3dfd3 30%, #e4dbcf 60%, #dfdbd4 75%, #dedad4); font: 12px/16px Roboto, "Open Sans", sans-serif; color: #222; }
.weather { display: flex; align-items: center; gap: 7px; padding-left: 19px; }
.weather svg { width: 24px; height: 24px; }
.weather small { display: block; font-size: 12px; color: #5c5c5c; }
.apps { display: flex; align-items: center; gap: 6px; }
.apps button { position: relative; display: grid; place-items: center; width: 38px; height: 40px; border-radius: 4px; }
.apps button svg { width: 24px; height: 24px; }
.find { display: flex; align-items: center; gap: 10px; width: 219px; height: 32px; padding: 0 11px; border: 1px solid #cfcdc0; border-radius: 16px; background: #f6f5f2; }
.find svg { width: 15px; height: 15px; }
.find input { flex: 1; min-width: 0; border: 0; background: none; outline: 0; padding: 0; font-size: 14px; }
.find input::placeholder { color: #5c5c5c; }
.apps .current { background: #f1eeea; }
.run::after, .current::after { content: ""; position: absolute; left: 50%; bottom: 0; width: 6px; height: 3px; margin-left: -3px; border-radius: 2px; background: #7f7b77; }
.current::after { width: 16px; margin-left: -8px; background: #0a78d4; }
.tray { display: flex; align-items: center; justify-content: flex-end; gap: 8px; padding-right: 20px; }
.tray svg { width: 16px; height: 16px; }
.tray .up { width: 12px; height: 8px; margin-right: 10px; }
.clock { text-align: right; margin-left: 6px; }
.badge { width: 16px; height: 16px; border-radius: 50%; background: #0868c4; color: #fff; text-align: center; font-size: 11px; }
```
